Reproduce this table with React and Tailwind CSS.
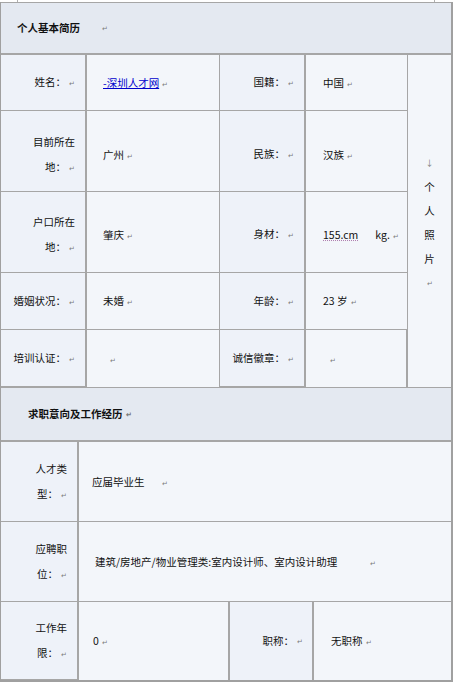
import React from "react";

const Mark = () => (
  <span className="ml-[3px] text-[7px] text-[#7a7a7a]">↵</span>
);

const Label = ({ lines, extra = "" }) => (
  <div
    className={`flex flex-col items-end justify-center border-r border-b border-[#a6a6a6] bg-[#eef2f9] pr-[10px] text-right leading-[25px] ${extra}`}
  >
    {lines.map((l, i) => (
      <div key={i}>
        {l}
        {i === lines.length - 1 && <Mark />}
      </div>
    ))}
  </div>
);

const Value = ({ children, pl = "pl-[16px]", extra = "" }) => (
  <div
    className={`flex items-center border-l border-r border-b border-[#a6a6a6] bg-[#f3f6fa] ${pl} ${extra}`}
  >
    <div>
      {children}
      <Mark />
    </div>
  </div>
);

export default function App() {
  return (
    <div
      className="w-[454px] h-[684px] bg-white text-[10.5px] text-[#111]"
      style={{ fontFamily: '"Noto Sans CJK SC", "Noto Sans", sans-serif' }}
    >
      <div className="flex h-[2px] w-[454px]">
        <div className="w-[18px] border-r border-[#b0b0b0]" />
        <div className="flex-1" />
        <div className="w-[20px] border-l border-[#b0b0b0]" />
      </div>

      <div className="w-[453px] border-l border-r-2 border-b-2 border-[#a0a0a0]">
        {/* header 1 */}
        <div className="flex h-[53px] items-center border-t border-b-2 border-[#a6a6a6] bg-[#e4e9f1] pl-[16px] font-bold">
          个人基本简历
          <span className="ml-[22px] text-[7px] font-normal text-[#7a7a7a]">↵</span>
        </div>

        {/* basic info */}
        <div className="grid grid-cols-[85px_134px_85px_102px_44px] grid-rows-[56px_81px_81px_57px_57px]">
          <Label lines={["姓名："]} />
          <Value>
            <span className="text-[#0000cc] underline">-深圳人才网</span>
          </Value>
          <Label lines={["国籍："]} />
          <Value pl="pl-[17px]" extra="border-r-0">中国</Value>
          <div className="row-span-5 flex flex-col items-center justify-center border-l border-[#a6a6a6] bg-[#f3f6fa] pt-[4px] leading-[24px]">
            <span className="text-[8px] text-[#7a7a7a]">↓</span>
            <span>个</span>
            <span>人</span>
            <span>照</span>
            <span>片</span>
            <span className="text-[7px] text-[#7a7a7a]">↵</span>
          </div>

          <Label lines={["目前所在", "地："]} extra="pt-[8px]" />
          <Value extra="pt-[7px]">广州</Value>
          <Label lines={["民族："]} extra="pt-[7px]" />
          <Value pl="pl-[17px]" extra="border-r-0 pt-[7px]">汉族</Value>

          <Label lines={["户口所在", "地："]} extra="pt-[6px]" />
          <Value extra="pt-[5px]">肇庆</Value>
          <Label lines={["身材："]} extra="pt-[5px]" />
          <Value pl="pl-[17px]" extra="border-r-0 pt-[5px]">
            <span className="underline decoration-[#b080b0] decoration-dotted">155.cm</span>
            <span className="ml-[17px]">kg.</span>
          </Value>

          <Label lines={["婚姻状况："]} />
          <Value>未婚</Value>
          <Label lines={["年龄："]} />
          <Value pl="pl-[17px]" extra="border-r-0">23 岁</Value>

          <Label lines={["培训认证："]} />
          <Value pl="pl-[20px]" extra="border-b-0">{""}</Value>
          <Label lines={["诚信徽章："]} />
          <Value pl="pl-[21px]" extra="border-b-0">{""}</Value>
        </div>

        {/* header 2 */}
        <div className="flex h-[55px] items-center border-t border-b-2 border-[#a6a6a6] bg-[#e4e9f1] pl-[27px] font-bold">
          求职意向及工作经历
          <Mark />
        </div>

        {/* job section */}
        <div className="grid grid-cols-[77px_151px_84px_138px] grid-rows-[80px_80px_78px]">
          <Label lines={["人才类", "型："]} />
          <Value pl="pl-[13px]" extra="col-span-3 border-r-0">
            应届毕业生<span className="ml-[14px]" />
          </Value>

          <Label lines={["应聘职", "位："]} />
          <Value pl="pl-[16px]" extra="col-span-3 border-r-0">
            建筑/房地产/物业管理类:室内设计师、室内设计助理
            <span className="ml-[30px]" />
          </Value>

          <Label lines={["工作年", "限："]} />
          <Value pl="pl-[14px]" extra="border-b-0">0</Value>
          <div className="flex items-center justify-end border-l border-r border-[#a6a6a6] bg-[#eef2f9] pr-[9px]">
            职称：
            <Mark />
          </div>
          <Value pl="pl-[17px]" extra="border-r-0 border-b-0">无职称</Value>
        </div>
      </div>
    </div>
  );
}
